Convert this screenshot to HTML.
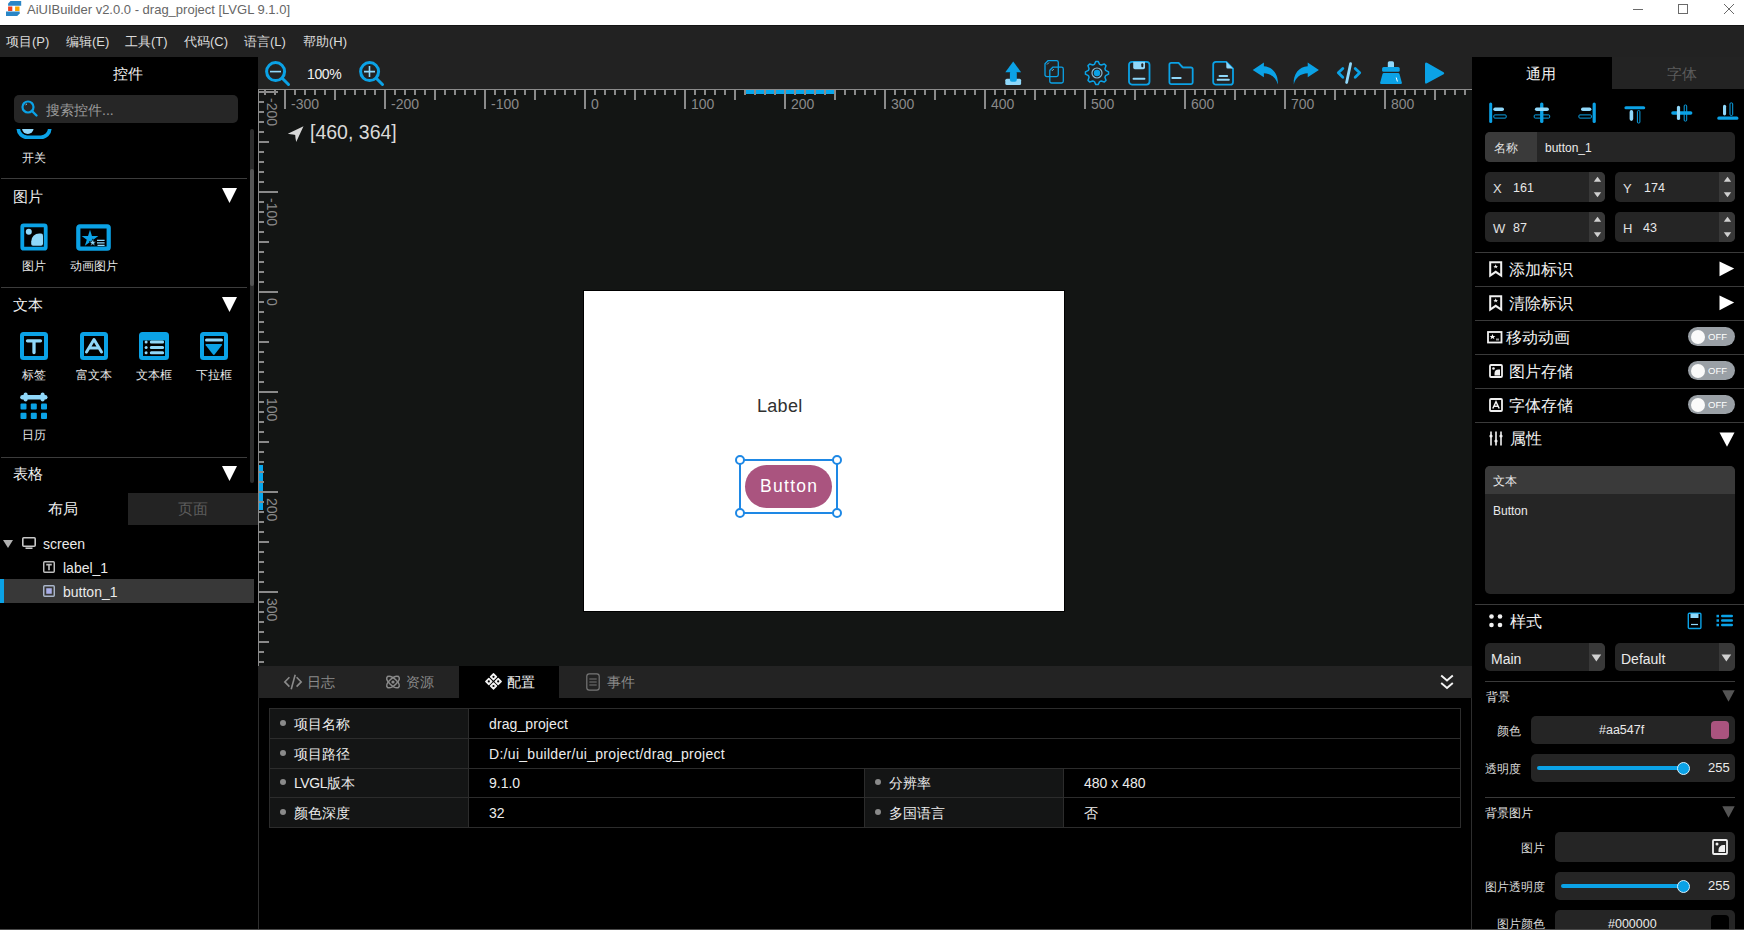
<!DOCTYPE html>
<html><head><meta charset="utf-8">
<style>
*{margin:0;padding:0;box-sizing:border-box}
html,body{width:1744px;height:930px;overflow:hidden;background:#000}
body{font-family:"Liberation Sans",sans-serif;position:relative;color:#e8e8e8}
.a{position:absolute}
.t{position:absolute;white-space:nowrap;line-height:1}
svg{position:absolute;overflow:visible}
</style></head><body>

<!-- TITLE BAR -->
<div class="a" style="left:0;top:0;width:1744px;height:25px;background:#fff"></div>



<!-- app icon -->
<svg style="left:4px;top:0px" width="20" height="20" viewBox="0 0 20 20">
<path d="M6.5 1.1H17.2V5.8H4.1V3.6Z" fill="#2a86c6"/>
<rect x="4.1" y="6.5" width="4.2" height="4.5" fill="#f04020"/>
<rect x="11.1" y="6.5" width="4.4" height="4.5" fill="#f8a400"/>
<path d="M2 11.6H15.7V13.6L13.2 16.1H2Z" fill="#2a86c6"/>
</svg>
<div class="t" style="left:27px;top:3px;font-size:13px;color:#666">AiUIBuilder v2.0.0 - drag_project [LVGL 9.1.0]</div>
<div class="a" style="left:1633px;top:9px;width:10px;height:1px;background:#6a6a6a"></div>
<div class="a" style="left:1678px;top:4px;width:10px;height:10px;border:1px solid #6a6a6a"></div>
<svg style="left:1724px;top:4px" width="10" height="10" viewBox="0 0 10 10"><path d="M0 0L10 10M10 0L0 10" stroke="#6a6a6a" stroke-width="1"/></svg>
<!-- MENU BAR -->
<div class="a" style="left:0;top:25px;width:1744px;height:32px;background:#222"></div>
<div class="a" style="left:0;top:25px;width:1744px;height:1px;background:#141414"></div>


<div class="t" style="left:6px;top:35px;font-size:13px;color:#dcdcdc">项目(P)</div>
<div class="t" style="left:66px;top:35px;font-size:13px;color:#dcdcdc">编辑(E)</div>
<div class="t" style="left:125px;top:35px;font-size:13px;color:#dcdcdc">工具(T)</div>
<div class="t" style="left:184px;top:35px;font-size:13px;color:#dcdcdc">代码(C)</div>
<div class="t" style="left:244px;top:35px;font-size:13px;color:#dcdcdc">语言(L)</div>
<div class="t" style="left:303px;top:35px;font-size:13px;color:#dcdcdc">帮助(H)</div>
<!-- LEFT PANEL -->
<div class="a" style="left:0;top:57px;width:258px;height:873px;background:#000"></div>


<div class="t" style="left:113px;top:65.5px;font-size:15px;color:#f0f0f0">控件</div>
<div class="a" style="left:14px;top:95px;width:224px;height:28px;background:#262626;border-radius:5px"></div>
<svg style="left:21px;top:100px" width="17" height="17" viewBox="0 0 17 17"><circle cx="7" cy="7" r="5.5" fill="none" stroke="#0ba2e6" stroke-width="2.2"/><path d="M11 11L15.5 15.5" stroke="#0ba2e6" stroke-width="2.4" stroke-linecap="round"/><path d="M4.6 5.2 A3 3 0 0 1 6 3.8" stroke="#90d8fa" stroke-width="1" fill="none"/></svg>
<div class="t" style="left:46px;top:103px;font-size:14px;color:#9a9a9a">搜索控件...</div>

<!-- scroll area -->
<div class="a" style="left:0;top:129px;width:250px;height:354px;overflow:hidden">
 <div class="a" style="left:0;top:-129px;width:250px;height:700px">
  <svg style="left:16px;top:110px" width="36" height="30" viewBox="0 0 36 30"><rect x="2.35" y="4" width="31.4" height="23.25" rx="8.8" fill="none" stroke="#0ba2e6" stroke-width="3.7"/><circle cx="11.8" cy="18.2" r="5.8" fill="#90d8fa"/></svg>
 </div>
</div>
<div class="t" style="left:22px;top:151.5px;font-size:12px;color:#e8e8e8">开关</div>
<div class="a" style="left:1px;top:178px;width:246px;height:1px;background:#3c3c3c"></div>

<div class="t" style="left:13px;top:189px;font-size:15px;color:#f0f0f0">图片</div>
<svg style="left:222px;top:188px" width="15" height="15" viewBox="0 0 15 15"><path d="M0 0H15L7.5 15Z" fill="#fff"/></svg>
<svg style="left:20px;top:223px" width="28" height="28" viewBox="0 0 28 28"><rect x="2.3" y="2.3" width="23.4" height="23.4" rx="1.5" fill="none" stroke="#0ba2e6" stroke-width="3.8"/><circle cx="8.8" cy="8.8" r="3" fill="#90d8fa"/><path d="M11.2 21V18.5A8 8 0 0 1 19.2 10.5H21A2 2 0 0 1 23 12.5V20.8A2 2 0 0 1 21 22.8H13A1.8 1.8 0 0 1 11.2 21Z" fill="#90d8fa"/></svg>
<svg style="left:76px;top:224px" width="35" height="27" viewBox="0 0 35 27"><rect x="2.3" y="2.3" width="30.4" height="22.4" rx="1.5" fill="none" stroke="#0ba2e6" stroke-width="4.2"/><path d="M14.00 5.80 L15.98 11.88 L22.37 11.88 L17.20 15.64 L19.17 21.72 L14.00 17.96 L8.83 21.72 L10.80 15.64 L5.63 11.88 L12.02 11.88Z" fill="#0ba2e6"/><path d="M16.70 14.90 L17.58 17.59 L20.41 17.59 L18.12 19.26 L18.99 21.96 L16.70 20.29 L14.41 21.96 L15.28 19.26 L12.99 17.59 L15.82 17.59Z" fill="#90d8fa" stroke="#000" stroke-width="0.6"/><path d="M21 16.3H28.6M21 18.8H28.6M21.5 21.3H28.6" stroke="#90d8fa" stroke-width="1.3"/></svg>
<div class="t" style="left:22px;top:260px;font-size:12px;color:#e8e8e8">图片</div>
<div class="t" style="left:70px;top:260px;font-size:12px;color:#e8e8e8">动画图片</div>
<div class="a" style="left:1px;top:287px;width:246px;height:1px;background:#3c3c3c"></div>

<div class="t" style="left:13px;top:297px;font-size:15px;color:#f0f0f0">文本</div>
<svg style="left:222px;top:297px" width="15" height="15" viewBox="0 0 15 15"><path d="M0 0H15L7.5 15Z" fill="#fff"/></svg>
<svg style="left:20px;top:332px" width="28" height="28" viewBox="0 0 28 28"><rect x="2" y="2" width="24" height="24" rx="1.5" fill="none" stroke="#0ba2e6" stroke-width="4"/><path d="M7.5 8.8H20.5M14 8.8V20.5" stroke="#90d8fa" stroke-width="3.3" stroke-linecap="round"/></svg>
<svg style="left:80px;top:332px" width="28" height="28" viewBox="0 0 28 28"><rect x="2" y="2" width="24" height="24" rx="1.5" fill="none" stroke="#0ba2e6" stroke-width="4"/><path d="M6.5 20L14 7.5L21.5 20M9.6 16H18.4" stroke="#90d8fa" stroke-width="3" stroke-linecap="round" stroke-linejoin="round" fill="none"/></svg>
<svg style="left:139px;top:332px" width="30" height="28" viewBox="0 0 30 28"><rect x="2" y="2" width="26" height="24" rx="1.5" fill="none" stroke="#0ba2e6" stroke-width="4"/><rect x="2" y="2" width="26" height="6.5" fill="#0ba2e6"/><circle cx="7.1" cy="10.1" r="1.5" fill="#90d8fa"/><circle cx="7.1" cy="15.4" r="1.5" fill="#90d8fa"/><circle cx="7.1" cy="20.7" r="1.5" fill="#90d8fa"/><path d="M12.3 10.1H23.6M12.3 15.4H23.6M12.3 20.7H23.6" stroke="#90d8fa" stroke-width="3" stroke-linecap="round"/></svg>
<svg style="left:200px;top:332px" width="28" height="28" viewBox="0 0 28 28"><rect x="2" y="2" width="24" height="24" rx="1.5" fill="none" stroke="#0ba2e6" stroke-width="4"/><path d="M6.5 7.9H21.5" stroke="#90d8fa" stroke-width="3" stroke-linecap="round"/><path d="M6.2 12H21.3Q22.6 12 21.8 13.2L14.6 22.6Q13.8 23.5 13 22.6L5.7 13.2Q4.9 12 6.2 12Z" fill="#0ba2e6"/></svg>
<div class="t" style="left:22px;top:369px;font-size:12px;color:#e8e8e8">标签</div>
<div class="t" style="left:76px;top:369px;font-size:12px;color:#e8e8e8">富文本</div>
<div class="t" style="left:136px;top:369px;font-size:12px;color:#e8e8e8">文本框</div>
<div class="t" style="left:196px;top:369px;font-size:12px;color:#e8e8e8">下拉框</div>
<svg style="left:20px;top:392px" width="28" height="28" viewBox="0 0 28 28"><path d="M2.5 5.3H25.2" stroke="#90d8fa" stroke-width="4.6" stroke-linecap="round"/><rect x="3.6" y="0.4" width="4" height="9.2" rx="2" fill="#90d8fa"/><rect x="20.6" y="0.4" width="4" height="9.2" rx="2" fill="#90d8fa"/><g fill="#0ba2e6"><rect x="0.5" y="11.5" width="6" height="6" rx="1"/><rect x="10.8" y="11.5" width="6" height="6" rx="1"/><rect x="21" y="11.5" width="6" height="6" rx="1"/><rect x="0.5" y="20.7" width="6" height="6.3" rx="1"/><rect x="10.8" y="20.7" width="6" height="6.3" rx="1"/><rect x="21" y="20.7" width="6" height="6.3" rx="1"/></g></svg>
<div class="t" style="left:22px;top:429px;font-size:12px;color:#e8e8e8">日历</div>
<div class="a" style="left:1px;top:457px;width:246px;height:1px;background:#3c3c3c"></div>
<div class="t" style="left:13px;top:466px;font-size:15px;color:#f0f0f0">表格</div>
<svg style="left:222px;top:466px" width="15" height="15" viewBox="0 0 15 15"><path d="M0 0H15L7.5 15Z" fill="#fff"/></svg>
<!-- scrollbar -->
<div class="a" style="left:250px;top:129px;width:4px;height:354px;background:#2c2c2c;border-radius:2px"></div>
<div class="a" style="left:250px;top:169px;width:4px;height:117px;background:#555;border-radius:2px"></div>

<!-- layout tabs -->
<div class="a" style="left:128px;top:493px;width:130px;height:32px;background:#232323"></div>
<div class="t" style="left:48px;top:501px;font-size:15px;color:#f0f0f0">布局</div>
<div class="t" style="left:178px;top:501px;font-size:15px;color:#5c5c5c">页面</div>

<!-- tree -->
<svg style="left:3px;top:540px" width="10" height="8" viewBox="0 0 10 8"><path d="M0 0H10L5 8Z" fill="#b0b0b0"/></svg>
<svg style="left:22px;top:537px" width="14" height="12" viewBox="0 0 14 12"><rect x="0.8" y="0.8" width="12.4" height="8.4" rx="1" fill="none" stroke="#c8c8c8" stroke-width="1.6"/><path d="M3.5 11.2H10.5" stroke="#c8c8c8" stroke-width="1.6"/></svg>
<div class="t" style="left:43px;top:537px;font-size:14px;color:#eaeaea">screen</div>
<svg style="left:43px;top:561px" width="12" height="12" viewBox="0 0 13 13"><rect x="0.8" y="0.8" width="11.4" height="11.4" rx="1" fill="none" stroke="#bdbdbd" stroke-width="1.6"/><path d="M3.5 4H9.5M6.5 4V10" stroke="#bdbdbd" stroke-width="1.8"/></svg>
<div class="t" style="left:63px;top:560.5px;font-size:14px;color:#eaeaea">label_1</div>
<div class="a" style="left:0;top:579px;width:254px;height:24px;background:#383838"></div>
<div class="a" style="left:0;top:579px;width:4px;height:24px;background:#0ba2e6"></div>
<svg style="left:43px;top:585px" width="12" height="12" viewBox="0 0 13 13"><rect x="0.8" y="0.8" width="11.4" height="11.4" rx="1" fill="none" stroke="#a8b4c8" stroke-width="1.6"/><rect x="3.5" y="3.5" width="6" height="6" fill="#a9aee8"/></svg>
<div class="t" style="left:63px;top:585px;font-size:14px;color:#eaeaea">button_1</div>

<!-- CANVAS TOOLBAR -->
<div class="a" style="left:258px;top:57px;width:1214px;height:32px;background:#222"></div>
<!-- CANVAS -->
<div class="a" style="left:258px;top:89px;width:1214px;height:577px;background:#131514"></div>


<!-- zoom icons -->
<svg style="left:264px;top:60px" width="28" height="28" viewBox="0 0 28 28"><circle cx="11.6" cy="11.6" r="9" fill="none" stroke="#0ba2e6" stroke-width="3"/><path d="M18.5 18.5L24.5 24.5" stroke="#0ba2e6" stroke-width="3" stroke-linecap="round"/><path d="M6 11.6H17" stroke="#90d8fa" stroke-width="1.6"/></svg>
<div class="t" style="left:307px;top:67px;font-size:14px;color:#f2f2f2;letter-spacing:-0.4px">100%</div>
<svg style="left:358px;top:60px" width="28" height="28" viewBox="0 0 28 28"><circle cx="11.6" cy="11.6" r="9" fill="none" stroke="#0ba2e6" stroke-width="3"/><path d="M18.5 18.5L24.5 24.5" stroke="#0ba2e6" stroke-width="3" stroke-linecap="round"/><path d="M6 11.6H17M11.5 6V17" stroke="#90d8fa" stroke-width="1.6"/></svg>
<!-- upload -->
<svg style="left:1005px;top:61px" width="17" height="25" viewBox="0 0 17 25"><rect x="0.3" y="17.7" width="15.8" height="6.3" rx="1.5" fill="#90d8fa"/><path d="M8.2 0.6L16.1 11.2H0.3Z" fill="#0ba2e6"/><rect x="4.9" y="10" width="6.9" height="10.7" rx="2" fill="#0ba2e6"/></svg>
<!-- copy -->
<svg style="left:1044px;top:59px" width="21" height="25" viewBox="0 0 21 25"><path d="M4 1.7H12.5A1.8 1.8 0 0 1 14.3 3.5V15.8A1.8 1.8 0 0 1 12.5 17.6H2.8A1.8 1.8 0 0 1 1 15.8V4.7Z" fill="none" stroke="#0ba2e6" stroke-width="1.3"/><path d="M8.8 8.2H17.5A1.8 1.8 0 0 1 19.3 10V22.2A1.8 1.8 0 0 1 17.5 24H7.6A1.8 1.8 0 0 1 5.8 22.2V11.2Z" fill="none" stroke="#0ba2e6" stroke-width="1.3"/><path d="M3 5.5L5 3.5M7.8 12L9.8 10" stroke="#90d8fa" stroke-width="0.8"/></svg>
<!-- gear -->
<svg style="left:1084px;top:60px" width="26" height="26" viewBox="0 0 26 26"><g transform="translate(13 13)"><path d="M-1.14 -11.54 L1.14 -11.54 L2.61 -8.61 L4.24 -7.94 L7.36 -8.97 L8.97 -7.36 L7.94 -4.24 L8.61 -2.61 L11.54 -1.14 L11.54 1.14 L8.61 2.61 L7.94 4.24 L8.97 7.36 L7.36 8.97 L4.24 7.94 L2.61 8.61 L1.14 11.54 L-1.14 11.54 L-2.61 8.61 L-4.24 7.94 L-7.36 8.97 L-8.97 7.36 L-7.94 4.24 L-8.61 2.61 L-11.54 1.14 L-11.54 -1.14 L-8.61 -2.61 L-7.94 -4.24 L-8.97 -7.36 L-7.36 -8.97 L-4.24 -7.94 L-2.61 -8.61Z" fill="none" stroke="#0ba2e6" stroke-width="1.5" stroke-linejoin="round"/></g><circle cx="13" cy="13" r="5" fill="none" stroke="#8ab8d0" stroke-width="1.2"/><circle cx="13" cy="13" r="3.2" fill="#0ba2e6"/></svg>
<!-- save -->
<svg style="left:1127px;top:60px" width="24" height="26" viewBox="0 0 24 26"><rect x="2" y="1.8" width="20.5" height="22.8" rx="3" fill="none" stroke="#0ba2e6" stroke-width="1.8"/><path d="M6.2 1.8H18V7.5A1.7 1.7 0 0 1 16.3 9.2H7.9A1.7 1.7 0 0 1 6.2 7.5Z" fill="#90d8fa"/><rect x="14.3" y="3.3" width="2" height="4" rx="1" fill="#222"/><path d="M6.5 18.7H17.5" stroke="#90d8fa" stroke-width="1.9" stroke-linecap="round"/></svg>
<!-- folder -->
<svg style="left:1168px;top:61px" width="26" height="25" viewBox="0 0 26 25"><path d="M13.5 4.5L15.5 6.8H24" stroke="#555" stroke-width="1.2" fill="none"/><path d="M3.2 1.8H10.6L14.6 6.4H22.9A1.8 1.8 0 0 1 24.7 8.2V21.3A1.8 1.8 0 0 1 22.9 23.1H3.2A1.8 1.8 0 0 1 1.4 21.3V3.6A1.8 1.8 0 0 1 3.2 1.8Z" fill="none" stroke="#0ba2e6" stroke-width="1.8" stroke-linejoin="round"/><path d="M4.3 17H12.7" stroke="#90d8fa" stroke-width="1.9" stroke-linecap="round"/></svg>
<!-- file -->
<svg style="left:1212px;top:60px" width="23" height="26" viewBox="0 0 23 26"><path d="M4 1.8H14.3L21 8.6V21.9A2.8 2.8 0 0 1 18.2 24.7H4A2.8 2.8 0 0 1 1.2 21.9V4.6A2.8 2.8 0 0 1 4 1.8Z" fill="none" stroke="#0ba2e6" stroke-width="1.8" stroke-linejoin="round"/><path d="M14.3 1.8V7A1.5 1.5 0 0 0 15.8 8.6H21Z" fill="#90d8fa"/><path d="M7.5 16H15.2M5.6 19.7H16.9" stroke="#90d8fa" stroke-width="1.9" stroke-linecap="round"/></svg>
<!-- undo -->
<svg style="left:1252px;top:62px" width="27" height="23" viewBox="0 0 27 23"><path d="M0.7 7.9L11.9 0.4V4.3C20.5 4.8 26.6 12 25.8 22.4C24.2 15.6 19 11.6 11.9 11.3V15.3Z" fill="#0ba2e6"/></svg>
<!-- redo -->
<svg style="left:1293px;top:62px" width="27" height="23" viewBox="0 0 27 23"><g transform="translate(26.6 0) scale(-1 1)"><path d="M0.7 7.9L11.9 0.4V4.3C20.5 4.8 26.6 12 25.8 22.4C24.2 15.6 19 11.6 11.9 11.3V15.3Z" fill="#0ba2e6"/></g></svg>
<!-- code -->
<svg style="left:1336px;top:61px" width="26" height="24" viewBox="0 0 26 24"><path d="M6.8 7.4L2.3 11.8L6.8 16.2M19.2 7.4L23.7 11.8L19.2 16.2" fill="none" stroke="#0ba2e6" stroke-width="2.8" stroke-linecap="round" stroke-linejoin="round"/><path d="M14.6 2.6L10.6 21.5" stroke="#90d8fa" stroke-width="2.8" stroke-linecap="round"/></svg>
<!-- broom -->
<svg style="left:1379px;top:60px" width="24" height="26" viewBox="0 0 24 26"><rect x="8.8" y="1.2" width="6.2" height="6.8" rx="1.6" fill="#90d8fa"/><rect x="3.1" y="7" width="17.6" height="4.8" rx="1.6" fill="#0ba2e6"/><path d="M4.8 13H19.2Q20.2 13 20.5 14L22.8 22.6Q23.2 24.1 21.7 24.1H2.3Q0.8 24.1 1.2 22.6L3.5 14Q3.8 13 4.8 13Z" fill="#0ba2e6"/><path d="M17.2 17.5L18.4 21.5" stroke="#fff" stroke-width="1"/></svg>
<!-- play -->
<svg style="left:1424px;top:61px" width="22" height="24" viewBox="0 0 22 24"><path d="M3 1.8Q1 0.8 1 3V21.2Q1 23.4 3 22.3L19.6 13.3Q21 12.2 19.6 11.2Z" fill="#0ba2e6"/></svg>

<!-- rulers -->
<div class="a" style="left:258px;top:89px;width:1214px;height:1px;background:#8a8a8a"></div>
<div class="a" style="left:258px;top:89px;width:1px;height:577px;background:#8a8a8a"></div>
<div class="a" style="left:745px;top:90px;width:89px;height:4px;background:#07a6ec"></div>
<div class="a" style="left:259px;top:465px;width:4px;height:45px;background:#07a6ec"></div>
<div class="a" style="left:258px;top:90px;width:1214px;height:20px;
 background:
  repeating-linear-gradient(90deg,#8a8a8a 0 2px,transparent 2px 100px) 26px 0/1214px 19px no-repeat,
  repeating-linear-gradient(90deg,#8a8a8a 0 2px,transparent 2px 100px) 76px 0/1214px 10px no-repeat,
  repeating-linear-gradient(90deg,#8a8a8a 0 2px,transparent 2px 10px) 6px 0/1214px 5px no-repeat"></div>
<div class="a" style="left:259px;top:90px;width:20px;height:576px;
 background:
  repeating-linear-gradient(180deg,#8a8a8a 0 2px,transparent 2px 100px) 0 1px/19px 576px no-repeat,
  repeating-linear-gradient(180deg,#8a8a8a 0 2px,transparent 2px 100px) 0 51px/10px 576px no-repeat,
  repeating-linear-gradient(180deg,#8a8a8a 0 2px,transparent 2px 10px) 0 1px/5px 576px no-repeat"></div>
<div class="t" style="left:291px;top:97px;font-size:14px;color:#8a8a8a">-300</div>
<div class="t" style="left:391px;top:97px;font-size:14px;color:#8a8a8a">-200</div>
<div class="t" style="left:491px;top:97px;font-size:14px;color:#8a8a8a">-100</div>
<div class="t" style="left:591px;top:97px;font-size:14px;color:#8a8a8a">0</div>
<div class="t" style="left:691px;top:97px;font-size:14px;color:#8a8a8a">100</div>
<div class="t" style="left:791px;top:97px;font-size:14px;color:#8a8a8a">200</div>
<div class="t" style="left:891px;top:97px;font-size:14px;color:#8a8a8a">300</div>
<div class="t" style="left:991px;top:97px;font-size:14px;color:#8a8a8a">400</div>
<div class="t" style="left:1091px;top:97px;font-size:14px;color:#8a8a8a">500</div>
<div class="t" style="left:1191px;top:97px;font-size:14px;color:#8a8a8a">600</div>
<div class="t" style="left:1291px;top:97px;font-size:14px;color:#8a8a8a">700</div>
<div class="t" style="left:1391px;top:97px;font-size:14px;color:#8a8a8a">800</div>
<div class="t" style="left:266px;top:98px;font-size:14px;color:#8a8a8a;transform-origin:0 0;transform:translate(13px,0) rotate(90deg)">-200</div>
<div class="t" style="left:266px;top:198px;font-size:14px;color:#8a8a8a;transform-origin:0 0;transform:translate(13px,0) rotate(90deg)">-100</div>
<div class="t" style="left:266px;top:298px;font-size:14px;color:#8a8a8a;transform-origin:0 0;transform:translate(13px,0) rotate(90deg)">0</div>
<div class="t" style="left:266px;top:398px;font-size:14px;color:#8a8a8a;transform-origin:0 0;transform:translate(13px,0) rotate(90deg)">100</div>
<div class="t" style="left:266px;top:498px;font-size:14px;color:#8a8a8a;transform-origin:0 0;transform:translate(13px,0) rotate(90deg)">200</div>
<div class="t" style="left:266px;top:598px;font-size:14px;color:#8a8a8a;transform-origin:0 0;transform:translate(13px,0) rotate(90deg)">300</div>

<svg style="left:287px;top:125px" width="18" height="18" viewBox="0 0 18 18"><path d="M0.8 8.7L16.5 1.2L9.2 17Q8.2 12 8.2 10Q7 9.5 0.8 8.7Z" fill="#d8d8d8"/></svg>
<div class="t" style="left:310px;top:122.5px;font-size:19.5px;color:#dadada">[460, 364]</div>

<!-- screen -->
<div class="a" style="left:583px;top:290px;width:482px;height:322px;background:#000"></div>
<div class="a" style="left:584px;top:291px;width:480px;height:320px;background:#fff"></div>
<div class="t" style="left:757px;top:397px;font-size:18px;color:#303030;letter-spacing:0.3px">Label</div>
<div class="a" style="left:745px;top:465px;width:87px;height:43px;border-radius:21.5px;background:#aa547f"></div>
<div class="t" style="left:760px;top:478px;font-size:17.5px;color:#fff;letter-spacing:1.3px">Button</div>
<div class="a" style="left:739px;top:459px;width:99px;height:55px;border:2px solid #1e88e5"></div>
<div class="a" style="left:735px;top:455px;width:10px;height:10px;border:2px solid #1e88e5;border-radius:50%;background:#fff"></div>
<div class="a" style="left:832px;top:455px;width:10px;height:10px;border:2px solid #1e88e5;border-radius:50%;background:#fff"></div>
<div class="a" style="left:735px;top:508px;width:10px;height:10px;border:2px solid #1e88e5;border-radius:50%;background:#fff"></div>
<div class="a" style="left:832px;top:508px;width:10px;height:10px;border:2px solid #1e88e5;border-radius:50%;background:#fff"></div>

<!-- BOTTOM PANEL -->
<div class="a" style="left:258px;top:666px;width:1214px;height:32px;background:#232323"></div>
<div class="a" style="left:258px;top:698px;width:1214px;height:232px;background:#000"></div>
<div class="a" style="left:258px;top:698px;width:1px;height:232px;background:#2e2e2e"></div>
<div class="a" style="left:1471px;top:698px;width:1px;height:232px;background:#2e2e2e"></div>


<div class="a" style="left:459px;top:666px;width:100px;height:32px;background:#000"></div>
<svg style="left:283px;top:674px" width="20" height="16" viewBox="0 0 20 16"><path d="M6.4 3.2L1.8 7.9L6.4 12.6M13.6 3.2L18.2 7.9L13.6 12.6" fill="none" stroke="#8a8a8a" stroke-width="1.6"/><path d="M12.2 0.8L8.2 15.2" stroke="#8a8a8a" stroke-width="1.6"/></svg>
<div class="t" style="left:306.5px;top:675px;font-size:14px;color:#8a8a8a">日志</div>
<svg style="left:385px;top:674px" width="16" height="16" viewBox="0 0 16 16"><g fill="none" stroke="#8a8a8a" stroke-width="1.5"><path d="M2.5 2.5Q0 5 5 10Q10 15 13.5 13.5Q16 11 11 6Q6 1 2.5 2.5Z"/><path d="M13.5 2.5Q16 5 11 10Q6 15 2.5 13.5Q0 11 5 6Q10 1 13.5 2.5Z"/></g><circle cx="8" cy="8" r="1.6" fill="#8a8a8a"/></svg>
<div class="t" style="left:406px;top:675px;font-size:14px;color:#8a8a8a">资源</div>
<svg style="left:484.8px;top:672.3px" width="17" height="19" viewBox="0 0 17 19"><path d="M8.5 1.7999999999999998L11.5 4.8L8.5 7.8L5.5 4.8Z" fill="#f4f4f4" stroke="#f4f4f4" stroke-width="1.4" stroke-linejoin="round"/><circle cx="8.5" cy="4.8" r="1.1" fill="#000"/><path d="M3.8 6.4L6.8 9.4L3.8 12.4L0.7999999999999998 9.4Z" fill="#f4f4f4" stroke="#f4f4f4" stroke-width="1.4" stroke-linejoin="round"/><circle cx="3.8" cy="9.4" r="1.1" fill="#000"/><path d="M13.2 6.4L16.2 9.4L13.2 12.4L10.2 9.4Z" fill="#f4f4f4" stroke="#f4f4f4" stroke-width="1.4" stroke-linejoin="round"/><circle cx="13.2" cy="9.4" r="1.1" fill="#000"/><path d="M8.5 11.0L11.5 14L8.5 17.0L5.5 14Z" fill="#f4f4f4" stroke="#f4f4f4" stroke-width="1.4" stroke-linejoin="round"/><circle cx="8.5" cy="14" r="1.1" fill="#000"/></svg>
<div class="t" style="left:507px;top:675px;font-size:14px;color:#f4f4f4">配置</div>
<svg style="left:586px;top:673px" width="14" height="18" viewBox="0 0 14 18"><path d="M3.2 0.8H10.8Q13.2 0.8 13.2 3.2V14.8Q13.2 17.2 10.8 17.2H3.2Q0.8 17.2 0.8 14.8V3.2Q0.8 0.8 3.2 0.8Z" fill="none" stroke="#777" stroke-width="1.2"/><path d="M3.3 6H10.7M3.3 9H10.7M3.3 12H10.7" stroke="#777" stroke-width="1"/></svg>
<div class="t" style="left:607px;top:675px;font-size:14px;color:#8a8a8a">事件</div>
<svg style="left:1440px;top:674px" width="14" height="17" viewBox="0 0 14 17"><path d="M1.2 1.5L7 6.5L12.8 1.5M1.2 9L7 14L12.8 9" fill="none" stroke="#f4f4f4" stroke-width="1.9"/></svg>
<!-- table -->
<div class="a" style="left:269px;top:708px;width:1192px;height:120px;background:#000;border:1px solid #2c2c2c"></div>
<div class="a" style="left:270px;top:709px;width:198px;height:118px;background:#141515"></div>
<div class="a" style="left:865px;top:768px;width:198px;height:59px;background:#141515"></div>
<div class="a" style="left:270px;top:738px;width:1190px;height:1px;background:#2c2c2c"></div>
<div class="a" style="left:270px;top:768px;width:1190px;height:1px;background:#2c2c2c"></div>
<div class="a" style="left:270px;top:797px;width:1190px;height:1px;background:#2c2c2c"></div>
<div class="a" style="left:468px;top:709px;width:1px;height:118px;background:#2c2c2c"></div>
<div class="a" style="left:864px;top:768px;width:1px;height:59px;background:#2c2c2c"></div>
<div class="a" style="left:1063px;top:768px;width:1px;height:59px;background:#2c2c2c"></div>
<div class="a" style="left:280px;top:720px;width:6px;height:6px;border-radius:50%;background:#8a8a8a"></div>
<div class="t" style="left:294px;top:717px;font-size:14px;color:#ececec">项目名称</div>
<div class="t" style="left:489px;top:717px;font-size:14px;color:#ececec;letter-spacing:0.1px">drag_project</div>
<div class="a" style="left:280px;top:750px;width:6px;height:6px;border-radius:50%;background:#8a8a8a"></div>
<div class="t" style="left:294px;top:747px;font-size:14px;color:#ececec">项目路径</div>
<div class="t" style="left:489px;top:747px;font-size:14px;color:#ececec;letter-spacing:0.3px">D:/ui_builder/ui_project/drag_project</div>
<div class="a" style="left:280px;top:779px;width:6px;height:6px;border-radius:50%;background:#8a8a8a"></div>
<div class="t" style="left:294px;top:776px;font-size:14px;color:#ececec"><span style="letter-spacing:-0.4px">LVGL</span>版本</div>
<div class="t" style="left:489px;top:776px;font-size:14px;color:#ececec">9.1.0</div>
<div class="a" style="left:280px;top:809px;width:6px;height:6px;border-radius:50%;background:#8a8a8a"></div>
<div class="t" style="left:294px;top:806px;font-size:14px;color:#ececec">颜色深度</div>
<div class="t" style="left:489px;top:806px;font-size:14px;color:#ececec">32</div>
<div class="a" style="left:875px;top:779px;width:6px;height:6px;border-radius:50%;background:#8a8a8a"></div>
<div class="t" style="left:889px;top:776px;font-size:14px;color:#ececec">分辨率</div>
<div class="t" style="left:1084px;top:776px;font-size:14px;color:#ececec">480 x 480</div>
<div class="a" style="left:875px;top:809px;width:6px;height:6px;border-radius:50%;background:#8a8a8a"></div>
<div class="t" style="left:889px;top:806px;font-size:14px;color:#ececec">多国语言</div>
<div class="t" style="left:1084px;top:806px;font-size:14px;color:#ececec">否</div>

<!-- RIGHT PANEL -->
<div class="a" style="left:1472px;top:57px;width:272px;height:873px;background:#000"></div>


<div class="a" style="left:1612px;top:57px;width:132px;height:32px;background:#232323"></div>
<div class="t" style="left:1526px;top:65.5px;font-size:15px;color:#f2f2f2">通用</div>
<div class="t" style="left:1667px;top:65.5px;font-size:15px;color:#5c5c5c">字体</div>
<!-- align icons -->
<svg style="left:1488px;top:101px" width="20" height="24" viewBox="0 0 20 24"><rect x="1.2" y="1.5" width="3" height="20.5" rx="1.5" fill="#0ba2e6"/><rect x="5.3" y="6.6" width="10.7" height="3.5" rx="1.75" fill="#90d8fa"/><rect x="5.8" y="13.9" width="12.4" height="3.2" rx="1" fill="none" stroke="#0ba2e6" stroke-width="1"/></svg>
<svg style="left:1532px;top:101px" width="20" height="24" viewBox="0 0 20 24"><rect x="8.1" y="1.5" width="3.3" height="20.5" rx="1.6" fill="#0ba2e6"/><rect x="2.9" y="6.6" width="14" height="3.5" rx="1.75" fill="#90d8fa"/><rect x="2.2" y="13.9" width="15.5" height="3.2" rx="1" fill="none" stroke="#0ba2e6" stroke-width="1"/></svg>
<svg style="left:1577px;top:101px" width="20" height="24" viewBox="0 0 20 24"><rect x="15.6" y="1.5" width="3.2" height="20.5" rx="1.6" fill="#0ba2e6"/><rect x="4" y="6.6" width="10.4" height="3.5" rx="1.75" fill="#90d8fa"/><rect x="1.9" y="13.9" width="12.5" height="3.2" rx="1" fill="none" stroke="#0ba2e6" stroke-width="1"/></svg>
<svg style="left:1623px;top:101px" width="24" height="24" viewBox="0 0 24 24"><rect x="1.4" y="5.2" width="20.8" height="3" rx="1.5" fill="#0ba2e6"/><rect x="6.6" y="9.1" width="3.6" height="10.8" rx="1.8" fill="#90d8fa"/><rect x="14.4" y="9.6" width="2.5" height="12.4" rx="1" fill="none" stroke="#0ba2e6" stroke-width="1"/></svg>
<svg style="left:1670px;top:101px" width="24" height="24" viewBox="0 0 24 24"><rect x="1.2" y="10.2" width="21.2" height="3.5" rx="1.75" fill="#0ba2e6"/><rect x="6.9" y="4.8" width="3.2" height="14.2" rx="1.6" fill="#90d8fa"/><rect x="14.2" y="4" width="2.5" height="16.1" rx="1" fill="none" stroke="#0ba2e6" stroke-width="1"/></svg>
<svg style="left:1716px;top:101px" width="24" height="24" viewBox="0 0 24 24"><rect x="1.3" y="15.6" width="21.1" height="3.1" rx="1.5" fill="#0ba2e6"/><rect x="7" y="3.8" width="3.1" height="10.6" rx="1.55" fill="#90d8fa"/><rect x="14" y="1.9" width="2.7" height="12.5" rx="1" fill="none" stroke="#0ba2e6" stroke-width="1"/></svg>
<!-- name -->
<div class="a" style="left:1485px;top:132px;width:250px;height:30px;background:#252525;border-radius:5px;overflow:hidden"><div class="a" style="left:0;top:0;width:52px;height:30px;background:#3a3a3a"></div></div>
<div class="t" style="left:1494px;top:142px;font-size:12px;color:#e0e0e0">名称</div>
<div class="t" style="left:1545px;top:141.5px;font-size:12px;color:#eaeaea">button_1</div>
<div class="a" style="left:1485px;top:172px;width:120px;height:30px;background:#252525;border-radius:5px;overflow:hidden"><div class="a" style="left:104px;top:0;width:16px;height:30px;background:#383838"></div></div>
<svg style="left:1593px;top:177px" width="10" height="20" viewBox="0 0 10 20"><path d="M0.8 4.8L4.5 -0.2L8.2 4.8Z" fill="#d0d0d0"/><path d="M0.8 15.3L4.5 20.3L8.2 15.3Z" fill="#d0d0d0"/></svg>
<div class="t" style="left:1493px;top:182px;font-size:13px;color:#e0e0e0">X</div>
<div class="t" style="left:1513px;top:182px;font-size:12.5px;color:#e8e8e8">161</div>

<div class="a" style="left:1615px;top:172px;width:120px;height:30px;background:#252525;border-radius:5px;overflow:hidden"><div class="a" style="left:104px;top:0;width:16px;height:30px;background:#383838"></div></div>
<svg style="left:1723px;top:177px" width="10" height="20" viewBox="0 0 10 20"><path d="M0.8 4.8L4.5 -0.2L8.2 4.8Z" fill="#d0d0d0"/><path d="M0.8 15.3L4.5 20.3L8.2 15.3Z" fill="#d0d0d0"/></svg>
<div class="t" style="left:1623px;top:182px;font-size:13px;color:#e0e0e0">Y</div>
<div class="t" style="left:1644px;top:182px;font-size:12.5px;color:#e8e8e8">174</div>

<div class="a" style="left:1485px;top:212px;width:120px;height:30px;background:#252525;border-radius:5px;overflow:hidden"><div class="a" style="left:104px;top:0;width:16px;height:30px;background:#383838"></div></div>
<svg style="left:1593px;top:217px" width="10" height="20" viewBox="0 0 10 20"><path d="M0.8 4.8L4.5 -0.2L8.2 4.8Z" fill="#d0d0d0"/><path d="M0.8 15.3L4.5 20.3L8.2 15.3Z" fill="#d0d0d0"/></svg>
<div class="t" style="left:1493px;top:222px;font-size:13px;color:#e0e0e0">W</div>
<div class="t" style="left:1513px;top:222px;font-size:12.5px;color:#e8e8e8">87</div>

<div class="a" style="left:1615px;top:212px;width:120px;height:30px;background:#252525;border-radius:5px;overflow:hidden"><div class="a" style="left:104px;top:0;width:16px;height:30px;background:#383838"></div></div>
<svg style="left:1723px;top:217px" width="10" height="20" viewBox="0 0 10 20"><path d="M0.8 4.8L4.5 -0.2L8.2 4.8Z" fill="#d0d0d0"/><path d="M0.8 15.3L4.5 20.3L8.2 15.3Z" fill="#d0d0d0"/></svg>
<div class="t" style="left:1623px;top:222px;font-size:13px;color:#e0e0e0">H</div>
<div class="t" style="left:1643px;top:222px;font-size:12.5px;color:#e8e8e8">43</div>

<div class="a" style="left:1475px;top:252px;width:269px;height:1px;background:#3a3a3a"></div>

<svg style="left:1489px;top:261px" width="14" height="16" viewBox="0 0 14 16"><path d="M1.2 1.2H12.2V14.5L6.7 10.8L1.2 14.5Z" fill="none" stroke="#f0f0f0" stroke-width="2" stroke-linejoin="miter"/><path d="M6.7 3.2L7.4 4.9H9.1L7.7 5.9L8.3 7.6L6.7 6.6L5.1 7.6L5.7 5.9L4.3 4.9H6Z" fill="#f0f0f0"/></svg>
<div class="t" style="left:1509px;top:262px;font-size:15.5px;color:#f2f2f2">添加标识</div>
<svg style="left:1719px;top:261px" width="16" height="16" viewBox="0 0 16 16"><path d="M0.5 0.5L15.2 7.6L0.5 15.2Z" fill="#fff"/></svg>
<div class="a" style="left:1475px;top:286px;width:269px;height:1px;background:#3a3a3a"></div>

<svg style="left:1489px;top:295px" width="14" height="16" viewBox="0 0 14 16"><path d="M1.2 1.2H12.2V14.5L6.7 10.8L1.2 14.5Z" fill="none" stroke="#f0f0f0" stroke-width="2" stroke-linejoin="miter"/><path d="M6.7 3.2L7.4 4.9H9.1L7.7 5.9L8.3 7.6L6.7 6.6L5.1 7.6L5.7 5.9L4.3 4.9H6Z" fill="#f0f0f0"/></svg>
<div class="t" style="left:1509px;top:296px;font-size:15.5px;color:#f2f2f2">清除标识</div>
<svg style="left:1719px;top:295px" width="16" height="16" viewBox="0 0 16 16"><path d="M0.5 0.5L15.2 7.6L0.5 15.2Z" fill="#fff"/></svg>
<div class="a" style="left:1475px;top:320px;width:269px;height:1px;background:#3a3a3a"></div>

<svg style="left:1487px;top:331px" width="16" height="13" viewBox="0 0 16 13"><rect x="1" y="1" width="13.5" height="10.5" fill="none" stroke="#f0f0f0" stroke-width="1.8"/><path d="M5.5 3L6.3 5H8.4L6.8 6.3L7.4 8.3L5.5 7L3.6 8.3L4.2 6.3L2.6 5H4.7Z" fill="#f0f0f0"/><rect x="9" y="7.5" width="3" height="2" fill="#999"/></svg>
<div class="t" style="left:1506px;top:330px;font-size:15.5px;color:#f2f2f2">移动动画</div>
<div class="a" style="left:1688px;top:327px;width:47px;height:19px;border-radius:10px;background:#9aa0a6"></div>
<div class="a" style="left:1691px;top:329.5px;width:14px;height:14px;border-radius:50%;background:#fafafa"></div>
<div class="t" style="left:1708px;top:332px;font-size:9.5px;color:#fff">OFF</div>

<div class="a" style="left:1475px;top:354px;width:269px;height:1px;background:#3a3a3a"></div>

<svg style="left:1489px;top:364px" width="14" height="14" viewBox="0 0 14 14"><rect x="1" y="1" width="12" height="12" rx="1" fill="none" stroke="#f0f0f0" stroke-width="1.8"/><circle cx="4.5" cy="4.5" r="1.3" fill="#f0f0f0"/><path d="M5.5 11.5V9.5A4 4 0 0 1 9.5 5.5H11V11.5Z" fill="#f0f0f0"/></svg>
<div class="t" style="left:1509px;top:364px;font-size:15.5px;color:#f2f2f2">图片存储</div>
<div class="a" style="left:1688px;top:361px;width:47px;height:19px;border-radius:10px;background:#9aa0a6"></div>
<div class="a" style="left:1691px;top:363.5px;width:14px;height:14px;border-radius:50%;background:#fafafa"></div>
<div class="t" style="left:1708px;top:366px;font-size:9.5px;color:#fff">OFF</div>

<div class="a" style="left:1475px;top:388px;width:269px;height:1px;background:#3a3a3a"></div>

<svg style="left:1489px;top:398px" width="14" height="14" viewBox="0 0 14 14"><rect x="1" y="1" width="12" height="12" rx="1" fill="none" stroke="#f0f0f0" stroke-width="1.8"/><path d="M3.8 10.5L7 3.8L10.2 10.5M5 8.3H9" fill="none" stroke="#f0f0f0" stroke-width="1.5"/></svg>
<div class="t" style="left:1509px;top:398px;font-size:15.5px;color:#f2f2f2">字体存储</div>
<div class="a" style="left:1688px;top:395px;width:47px;height:19px;border-radius:10px;background:#9aa0a6"></div>
<div class="a" style="left:1691px;top:397.5px;width:14px;height:14px;border-radius:50%;background:#fafafa"></div>
<div class="t" style="left:1708px;top:400px;font-size:9.5px;color:#fff">OFF</div>

<div class="a" style="left:1475px;top:422px;width:269px;height:1px;background:#3a3a3a"></div>

<svg style="left:1489px;top:431px" width="14" height="15" viewBox="0 0 14 15"><path d="M2 0.5V14.5M7 0.5V14.5M12 0.5V14.5" stroke="#f0f0f0" stroke-width="1.6"/><circle cx="2" cy="5" r="1.6" fill="#f0f0f0"/><circle cx="7" cy="10" r="1.6" fill="#f0f0f0"/><circle cx="12" cy="5" r="1.6" fill="#f0f0f0"/></svg>
<div class="t" style="left:1510px;top:431px;font-size:16px;color:#f2f2f2">属性</div>
<svg style="left:1719px;top:432px" width="16" height="15" viewBox="0 0 16 15"><path d="M0.5 0.5H15.5L8 14.7Z" fill="#fff"/></svg>
<!-- text box -->
<div class="a" style="left:1485px;top:466px;width:250px;height:128px;background:#252525;border-radius:5px;overflow:hidden"><div class="a" style="left:0;top:0;width:250px;height:28px;background:#3a3a3a"></div></div>
<div class="t" style="left:1493px;top:475px;font-size:12px;color:#eaeaea">文本</div>
<div class="t" style="left:1493px;top:505px;font-size:12px;color:#eaeaea">Button</div>
<div class="a" style="left:1475px;top:604px;width:269px;height:1px;background:#3a3a3a"></div>

<!-- style -->
<svg style="left:1488px;top:613px" width="16" height="16" viewBox="0 0 16 16"><circle cx="3.5" cy="3.5" r="2.3" fill="#f0f0f0"/><circle cx="12" cy="3.5" r="2.3" fill="#f0f0f0"/><circle cx="3.5" cy="12" r="2.3" fill="#f0f0f0"/><circle cx="12" cy="12" r="2.3" fill="#f0f0f0"/></svg>
<div class="t" style="left:1510px;top:614px;font-size:16px;color:#f2f2f2">样式</div>
<svg style="left:1687px;top:612px" width="16" height="18" viewBox="0 0 16 18"><rect x="1.3" y="1.3" width="12.6" height="15.2" rx="1" fill="none" stroke="#0ba2e6" stroke-width="1.4"/><rect x="3.5" y="1.5" width="8" height="4.5" fill="#90d8fa"/><path d="M4 12.5H11" stroke="#90d8fa" stroke-width="1.2"/></svg>
<svg style="left:1716px;top:614px" width="18" height="14" viewBox="0 0 18 14"><g fill="#0ba2e6"><rect x="0.5" y="0.8" width="2.5" height="2.5"/><rect x="0.5" y="5.3" width="2.5" height="2.5"/><rect x="0.5" y="9.8" width="2.5" height="2.5"/><rect x="5" y="0.8" width="12" height="2.5" rx="1.2"/><rect x="5" y="5.3" width="12" height="2.5" rx="1.2"/><rect x="5" y="9.8" width="12" height="2.5" rx="1.2"/></g></svg>
<div class="a" style="left:1485px;top:643px;width:120px;height:28px;background:#252525;border-radius:5px;overflow:hidden"><div class="a" style="left:104px;top:0;width:16px;height:28px;background:#383838"></div></div>
<svg style="left:1591px;top:654px" width="11" height="8" viewBox="0 0 11 8"><path d="M0.5 0.5H10.2L5.35 7.5Z" fill="#d0d0d0"/></svg>
<div class="t" style="left:1491px;top:651.5px;font-size:14px;color:#eaeaea">Main</div>
<div class="a" style="left:1615px;top:643px;width:120px;height:28px;background:#252525;border-radius:5px;overflow:hidden"><div class="a" style="left:104px;top:0;width:16px;height:28px;background:#383838"></div></div>
<svg style="left:1721px;top:654px" width="11" height="8" viewBox="0 0 11 8"><path d="M0.5 0.5H10.2L5.35 7.5Z" fill="#d0d0d0"/></svg>
<div class="t" style="left:1621px;top:651.5px;font-size:14px;color:#eaeaea">Default</div>
<div class="a" style="left:1485px;top:681px;width:250px;height:1px;background:#3a3a3a"></div>

<div class="t" style="left:1486px;top:691px;font-size:12px;color:#e0e0e0">背景</div>
<svg style="left:1722px;top:690px" width="13" height="12" viewBox="0 0 13 12"><path d="M0.3 0.3H12.7L6.5 11.8Z" fill="#555"/></svg>
<div class="t" style="left:1497px;top:725px;font-size:12px;color:#d8d8d8">颜色</div>
<div class="a" style="left:1531px;top:716px;width:204px;height:28px;background:#252525;border-radius:5px"></div>
<div class="t" style="left:1599px;top:724px;font-size:12.5px;color:#eaeaea">#aa547f</div>
<div class="a" style="left:1711px;top:721px;width:18px;height:18px;background:#aa547f;border-radius:4px"></div>
<div class="t" style="left:1485px;top:763px;font-size:12px;color:#d8d8d8">透明度</div>
<div class="a" style="left:1531px;top:754px;width:204px;height:28px;background:#252525;border-radius:5px"></div>
<div class="a" style="left:1537px;top:766px;width:146px;height:4px;background:#0ba2e6;border-radius:2px"></div>
<div class="a" style="left:1676.5px;top:761.5px;width:13px;height:13px;background:#0ba2e6;border:1.5px solid #d8f2ff;border-radius:50%"></div>
<div class="t" style="left:1708px;top:761px;font-size:13px;color:#eaeaea">255</div>
<div class="a" style="left:1485px;top:797px;width:250px;height:1px;background:#3a3a3a"></div>

<div class="t" style="left:1485px;top:807px;font-size:12px;color:#e0e0e0">背景图片</div>
<svg style="left:1722px;top:806px" width="13" height="12" viewBox="0 0 13 12"><path d="M0.3 0.3H12.7L6.5 11.8Z" fill="#555"/></svg>
<div class="t" style="left:1521px;top:842px;font-size:12px;color:#d8d8d8">图片</div>
<div class="a" style="left:1555px;top:832px;width:180px;height:30px;background:#252525;border-radius:5px"></div>
<svg style="left:1712px;top:839px" width="16" height="16" viewBox="0 0 16 16"><rect x="1" y="1" width="14" height="14" rx="1" fill="none" stroke="#f0f0f0" stroke-width="1.8"/><circle cx="5" cy="5" r="1.5" fill="#f0f0f0"/><path d="M6.5 13V11A5 5 0 0 1 11.5 6H13V13Z" fill="#f0f0f0"/></svg>
<div class="t" style="left:1485px;top:881px;font-size:12px;color:#d8d8d8">图片透明度</div>
<div class="a" style="left:1555px;top:872px;width:180px;height:28px;background:#252525;border-radius:5px"></div>
<div class="a" style="left:1561px;top:884px;width:122px;height:4px;background:#0ba2e6;border-radius:2px"></div>
<div class="a" style="left:1676.5px;top:879.5px;width:13px;height:13px;background:#0ba2e6;border:1.5px solid #d8f2ff;border-radius:50%"></div>
<div class="t" style="left:1708px;top:879px;font-size:13px;color:#eaeaea">255</div>
<div class="t" style="left:1497px;top:918px;font-size:12px;color:#d8d8d8">图片颜色</div>
<div class="a" style="left:1555px;top:910px;width:180px;height:28px;background:#252525;border-radius:5px"></div>
<div class="t" style="left:1608px;top:918px;font-size:12.5px;color:#eaeaea">#000000</div>
<div class="a" style="left:1711px;top:915px;width:18px;height:18px;background:#000;border-radius:4px"></div>
<div class="a" style="left:0;top:929px;width:1744px;height:1px;background:#4a4a4a"></div>

</body></html>
